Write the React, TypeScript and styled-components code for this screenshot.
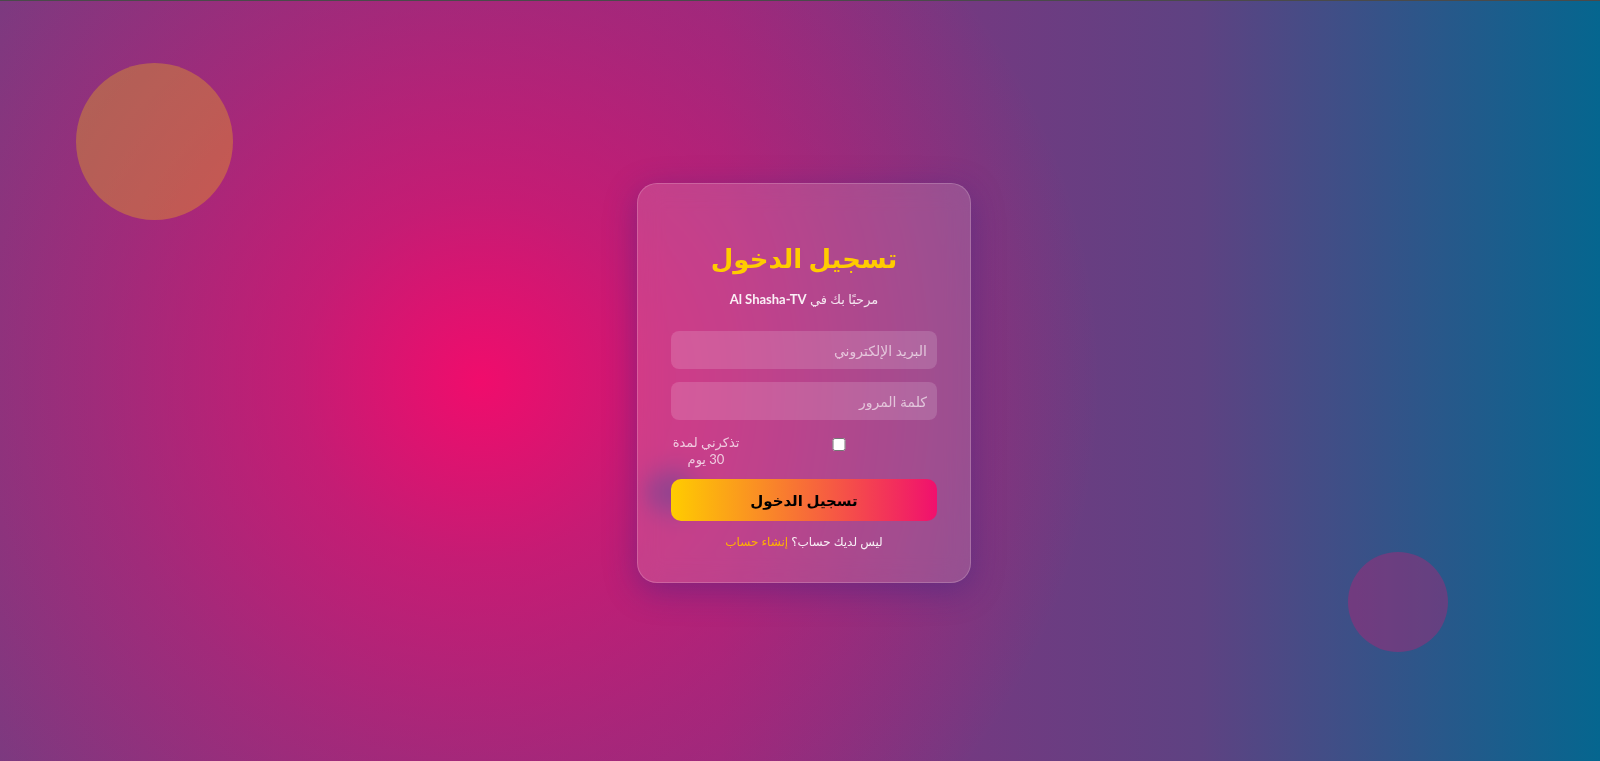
import { createGlobalStyle } from "styled-components";
import styled from "styled-components";

const GlobalStyle = createGlobalStyle`
  html, body {
    margin: 0;
    padding: 0;
  }
  body {
    font-family: Lato, "Noto Sans", "DejaVu Sans", sans-serif;
    background: #7b3a80;
  }
  * {
    box-sizing: border-box;
  }
`;

const Page = styled.div`
  position: relative;
  direction: rtl;
  height: 100vh;
  overflow: hidden;
  border-top: 1px solid #4a4a4a;
  padding: 4px 0 0 8px;
  display: flex;
  align-items: center;
  justify-content: center;
  background:
    radial-gradient(
      circle at 30% 50%,
      rgba(240, 12, 108, 1) 0px,
      rgba(240, 12, 108, 0.6) 180px,
      rgba(240, 12, 108, 0.3) 380px,
      rgba(240, 12, 108, 0) 620px
    ),
    linear-gradient(90deg, #7b3a80 0%, #8a3080 45%, #5e4282 75%, #05668f 100%);
`;

const Bubble = styled.div<{ $size: number; $color: string; $blur?: number }>`
  position: absolute;
  width: ${(p) => p.$size}px;
  height: ${(p) => p.$size}px;
  border-radius: 50%;
  background: ${(p) => p.$color};
  filter: ${(p) => (p.$blur ? `blur(${p.$blur}px)` : "none")};
  z-index: 0;
`;

const Card = styled.form`
  position: relative;
  z-index: 1;
  width: 334px;
  padding: 54px 33px 31px;
  border-radius: 20px;
  border: 1px solid rgba(255, 255, 255, 0.18);
  background: rgba(255, 255, 255, 0.15);
  backdrop-filter: blur(12px);
  box-shadow: 0 8px 32px 0 rgba(31, 38, 135, 0.37);
  display: flex;
  flex-direction: column;
  text-align: center;
`;

const Title = styled.h2`
  margin: 0 0 11px;
  font-size: 26px;
  line-height: 40px;
  font-weight: 700;
  color: #ffcc00;
`;

const Subtitle = styled.p`
  margin: 0 0 22px;
  font-size: 13px;
  line-height: 20px;
  color: rgba(255, 255, 255, 0.85);

  strong {
    font-weight: 700;
    color: rgba(255, 255, 255, 0.92);
  }
`;

const Field = styled.input`
  width: 100%;
  height: 38px;
  margin: 0 0 13px;
  padding: 0 10px;
  border: none;
  border-radius: 8px;
  background: rgba(255, 255, 255, 0.15);
  color: #fff;
  font-family: inherit;
  font-size: 14px;
  outline: none;

  &::placeholder {
    color: rgba(255, 255, 255, 0.62);
  }
`;

const RememberRow = styled.div`
  display: flex;
  align-items: center;
  height: 35px;
  margin: 0 0 11px;
`;

const CheckBox = styled.input`
  flex: 1;
  margin: 0;
  height: 13px;
  position: relative;
  top: -6px;
`;

const RememberLabel = styled.label`
  width: 70px;
  font-size: 13px;
  line-height: 17px;
  text-align: center;
  color: rgba(255, 255, 255, 0.72);
`;

const SubmitButton = styled.button`
  width: 100%;
  height: 42px;
  margin: 0 0 12px;
  border: none;
  border-radius: 10px;
  background: linear-gradient(90deg, #ffcc00 0%, #f0106e 100%);
  color: #000;
  font-family: inherit;
  font-size: 15px;
  font-weight: 700;
  cursor: pointer;
`;

const SignupLine = styled.p`
  margin: 0;
  font-size: 12px;
  line-height: 18px;
  color: rgba(255, 255, 255, 0.92);

  a {
    color: #ffb300;
    text-decoration: none;
  }
`;

export default function App() {
  return (
    <>
      <GlobalStyle />
      <Page>
        <Bubble $size={157} $color="rgba(255, 204, 0, 0.3)" style={{ left: 76, top: 62 }} />
        <Bubble $size={100} $color="rgba(240, 12, 108, 0.3)" style={{ left: 1348, top: 551 }} />
        <Bubble $size={42} $blur={6} $color="rgba(70, 40, 130, 0.65)" style={{ left: 650, top: 470 }} />
        <Card onSubmit={(e) => e.preventDefault()}>
          <Title>تسجيل الدخول</Title>
          <Subtitle>
            مرحبًا بك في <strong>Al Shasha-TV</strong>
          </Subtitle>
          <Field type="email" placeholder="البريد الإلكتروني" />
          <Field type="password" placeholder="كلمة المرور" />
          <RememberRow>
            <CheckBox type="checkbox" id="remember" />
            <RememberLabel htmlFor="remember">تذكرني لمدة 30 يوم</RememberLabel>
          </RememberRow>
          <SubmitButton type="submit">تسجيل الدخول</SubmitButton>
          <SignupLine>
            ليس لديك حساب؟ <a href="#">إنشاء حساب</a>
          </SignupLine>
        </Card>
      </Page>
    </>
  );
}
